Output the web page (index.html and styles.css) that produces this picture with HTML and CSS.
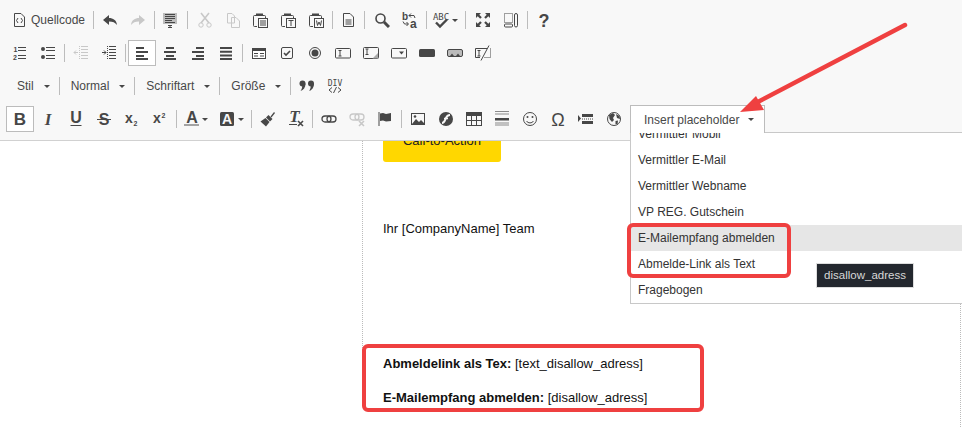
FILE: index.html
```html
<!DOCTYPE html>
<html lang="de">
<head>
<meta charset="utf-8">
<title>Editor</title>
<link rel="stylesheet" href="styles.css">
</head>
<body>
<svg class="defs" aria-hidden="true">
  <symbol id="source" viewBox="0 0 16 16"><path d="M2.500 1.500H9L12.500 5V14.500H2.500Z" class="ol"/><path d="M6 6 4.500 8.500 6 11M9 6 10.500 8.500 9 11" class="ol"/></symbol>
  <symbol id="undo" viewBox="0 0 16 16"><path d="M1 8 7 3V6C11 6 14.500 8 15 13 13 10.500 11 9.500 7 9.500V13Z"/></symbol>
  <symbol id="redo" viewBox="0 0 16 16"><path d="M15 8 9 3V6C5 6 1.500 8 1 13 3 10.500 5 9.500 9 9.500V13Z"/></symbol>
  <symbol id="templates" viewBox="0 0 16 16"><rect x="1" y="1" width="14" height="11" fill="#bdbdbd"/><path d="M3 2.500H13M3 4.500H13M3 6.500H13M3 8.500H10M3 10.500H13" class="ol"/><path d="M6 13.500H10M8 13.500V15.500M6 15.500H10" class="ol"/></symbol>
  <symbol id="cut" viewBox="0 0 16 16"><path d="M4 1 12 11M12 1 4 11" class="th"/><circle cx="4" cy="13" r="2.200" class="ol"/><circle cx="12" cy="13" r="2.200" class="ol"/></symbol>
  <symbol id="copy" viewBox="0 0 16 16"><path d="M2.500 1.500H7L9.500 4V11H2.500ZM6.500 5.500H11L14.500 9V15.500H6.500Z" class="ol"/></symbol>
  <symbol id="clip" viewBox="0 0 16 16"><path d="M4 3.500H2.500A1 1 0 0 0 1.500 4.500V13.500A1 1 0 0 0 2.500 14.500H5M11 3.500H12.500A1 1 0 0 1 13.500 4.500V6" class="ol"/><path d="M4 1.500H11V4H4Z"/></symbol>
  <symbol id="paste" viewBox="0 0 16 16"><use href="#clip"/><rect x="6.500" y="6.500" width="9" height="9" class="ol"/><path d="M8 9H14M8 11H14M8 13H14" class="ol"/></symbol>
  <symbol id="pastetext" viewBox="0 0 16 16"><use href="#clip"/><rect x="6.500" y="6.500" width="9" height="9" class="ol"/><path d="M8.500 8.500H13.500M11 8.500V14" class="ol"/></symbol>
  <symbol id="pasteword" viewBox="0 0 16 16"><use href="#clip"/><rect x="6.500" y="6.500" width="9" height="9" class="ol"/><path d="M8.500 8.500 9.500 13.500 11 10 12.500 13.500 13.500 8.500" class="ol"/></symbol>
  <symbol id="newdoc" viewBox="0 0 16 16"><path d="M3.500 1.500H10L13.500 5V14.500H3.500Z" class="ol"/><path d="M5.500 8H11.500M5.500 10H11.500M5.500 12H11.500" class="ol"/></symbol>
  <symbol id="find" viewBox="0 0 16 16"><circle cx="6.500" cy="6.500" r="4.500" class="th"/><path d="M10 10 15 15" class="thk"/></symbol>
  <symbol id="max" viewBox="0 0 16 16"><path d="M1 1H6L4.300 2.700 6.800 5.200 5.200 6.800 2.700 4.300 1 6ZM15 1V6L13.300 4.300 10.800 6.800 9.200 5.200 11.700 2.700 10 1ZM1 15V10L2.700 11.700 5.200 9.200 6.800 10.800 4.300 13.300 6 15ZM15 15H10L11.700 13.300 9.200 10.800 10.800 9.200 13.300 11.700 15 10Z"/></symbol>
  <symbol id="blocks" viewBox="0 0 16 16"><path d="M1.500 1.500H9.500V10.500H1.500Z" class="dot"/><rect x="1.500" y="12" width="8" height="3" rx="1" class="ol"/><rect x="11.500" y="1.500" width="3" height="13.500" rx="1.500" class="ol"/></symbol>
  <symbol id="ul" viewBox="0 0 16 16"><circle cx="3" cy="4" r="2"/><circle cx="3" cy="12" r="2"/><path d="M6 2.500H15M6 5.500H15M6 10.500H15M6 13.500H15" class="ol"/></symbol>
  <symbol id="outdent" viewBox="0 0 16 16"><path d="M8 1.500H15M8 4.500H15M8 7.500H15M8 10.500H15M8 13.500H15M1 7.500H5M3 5.500 1 7.500 3 9.500" class="ol"/><path d="M6.500 1V15" class="dot"/></symbol>
  <symbol id="indent" viewBox="0 0 16 16"><path d="M8 1.500H15M8 4.500H15M8 7.500H15M8 10.500H15M8 13.500H15M1 7.500H5M3 5.500 5 7.500 3 9.500" class="ol"/><path d="M6.500 1V15" class="dot"/></symbol>
  <symbol id="left" viewBox="0 0 16 16"><path d="M2 2H10V4H2ZM2 6H14V8H2ZM2 10H10V12H2ZM2 13H14V15H2Z"/></symbol>
  <symbol id="center" viewBox="0 0 16 16"><path d="M4 2H12V4H4ZM2 6H14V8H2ZM4 10H12V12H4ZM2 13H14V15H2Z"/></symbol>
  <symbol id="right" viewBox="0 0 16 16"><path d="M6 2H14V4H6ZM2 6H14V8H2ZM6 10H14V12H6ZM2 13H14V15H2Z"/></symbol>
  <symbol id="justify" viewBox="0 0 16 16"><path d="M2 2H14V4H2ZM2 5.700H14V7.700H2ZM2 9.400H14V11.400H2ZM2 13H14V15H2Z"/></symbol>
  <symbol id="form" viewBox="0 0 16 16"><rect x="1" y="3" width="14" height="11"/><path d="M2 6H14V13H2Z" fill="#fff"/><path d="M3 8H7V9H3ZM9 8H13V9H9ZM3 10.500H7V11.500H3ZM9 10.500H13V11.500H9Z"/></symbol>
  <symbol id="check" viewBox="0 0 16 16"><rect x="2.500" y="2.500" width="11" height="11" rx="1.500" class="ol"/><path d="M5 8 7 10 11 6" class="th"/></symbol>
  <symbol id="radio" viewBox="0 0 16 16"><circle cx="8" cy="8" r="5.500" class="ol"/><circle cx="8" cy="8" r="3.500"/></symbol>
  <symbol id="tfield" viewBox="0 0 16 16"><rect x="0.500" y="3.500" width="15" height="9.500" rx="1" class="ol"/><path d="M3.500 5.500H6.500M5 5.500V11M3.500 11H6.500" class="ol"/></symbol>
  <symbol id="tarea" viewBox="0 0 16 16"><rect x="0.500" y="2.500" width="15" height="11" rx="1" class="ol"/><path d="M2.500 4H5.500M4 4V9.500M2.500 9.500H5.500" class="ol"/><path d="M15 8 9.500 13.500H15Z" fill="#aaa"/></symbol>
  <symbol id="select" viewBox="0 0 16 16"><rect x="0.500" y="3.500" width="15" height="9.500" rx="1" class="ol"/><path d="M8 6.500H13L10.500 9.500Z"/></symbol>
  <symbol id="button" viewBox="0 0 16 16"><rect x="0" y="4" width="16" height="8" rx="1.500"/></symbol>
  <symbol id="imgbtn" viewBox="0 0 16 16"><rect x="0.500" y="4.500" width="15" height="7" rx="1.500" fill="#bbb" class="ols"/><path d="M3 11 5 8.500 7 11M9 11 11 8.500 13 11"/></symbol>
  <symbol id="hidden" viewBox="0 0 16 16"><path d="M12 3.500H.500V12.500H5M2.500 5.500H5.500M4 5.500V11M2.500 11H5.500" class="ol"/><path d="M15.500 3.500V12.500H9" class="dot"/><path d="M14 .5 6 15.500" class="ol"/></symbol>
  <symbol id="quote" viewBox="0 0 16 16"><circle cx="3.500" cy="5.500" r="3"/><path d="M6.500 5.500C6.500 9.500 4.500 12 1.500 13 2.800 11.300 3.200 9.500 3.200 8Z"/><circle cx="12" cy="5.500" r="3"/><path d="M15 5.500C15 9.500 13 12 10 13 11.300 11.300 11.700 9.500 11.700 8Z"/></symbol>
  <symbol id="link" viewBox="0 0 16 16"><rect x="1" y="5" width="9" height="6" rx="3" class="ml"/><rect x="6" y="5" width="9" height="6" rx="3" class="ml"/></symbol>
  <symbol id="unlink" viewBox="0 0 16 16"><rect x="1" y="3" width="9" height="6" rx="3" class="ml"/><rect x="6" y="3" width="9" height="6" rx="3" class="ml"/><path d="M10 10 15 15M15 10 10 15" class="th"/></symbol>
  <symbol id="anchor" viewBox="0 0 16 16"><path d="M2 1V15" class="ol"/><path d="M3 2.500 6 2 9 3 14 2V10L9 10.500 6 9.500 3 10Z"/></symbol>
  <symbol id="brush" viewBox="0 0 16 16"><path d="M10.500 5.500 14 1 15 2 11.500 6.500Z"/><path d="M8.500 4 12.500 8 10 10.500 6 6.500Z"/><path d="M5.500 7 9.500 11 6 15.500 .5 10.500Z"/></symbol>
  <symbol id="image" viewBox="0 0 16 16"><rect x="1.500" y="2.500" width="13" height="11" class="ol"/><path d="M2 13 6 8 9 11 11 9 14 12V13Z"/><circle cx="5" cy="5.500" r="1.300"/></symbol>
  <symbol id="flash" viewBox="0 0 16 16"><circle cx="8" cy="8" r="7"/><path d="M12 4C9 4 8.500 5.500 7.500 8 6.500 10.500 6 12 4 12" stroke="#f8f8f8" stroke-width="2" fill="none"/><path d="M6 7.500H10" stroke="#f8f8f8" stroke-width="1.500"/></symbol>
  <symbol id="table" viewBox="0 0 16 16"><rect x="0.500" y="1.500" width="15" height="13" class="ol"/><path d="M1 1.500H15V5H1Z"/><path d="M5.500 5V14M10.500 5V14M1 9.500H15" class="ol"/></symbol>
  <symbol id="hr" viewBox="0 0 16 16"><path d="M1 .5H15M1 3H15M1 12H15M1 14H15" class="gl"/><path d="M1 7H15V9.500H1Z"/></symbol>
  <symbol id="smiley" viewBox="0 0 16 16"><circle cx="8" cy="8" r="6.500" class="ol"/><circle cx="5.500" cy="6" r="1"/><circle cx="10.500" cy="6" r="1"/><path d="M4.500 10C6 12.500 10 12.500 11.500 10" class="ol"/></symbol>
  <symbol id="pbreak" viewBox="0 0 16 16"><path d="M0 4 3 7.500 0 11Z"/><path d="M4 3H15V6H4ZM4 10H15V13H4Z"/><path d="M4 8H15" class="dot"/></symbol>
  <symbol id="globe" viewBox="0 0 16 16"><circle cx="8" cy="8" r="6.500" class="ol"/><path d="M3 4 7 2 9 4 7 7 8 9 6 11 3.500 8ZM10 3 13.500 5 14 8 11 7ZM9.500 10 12 9.500 11.500 13.500 9.500 13Z"/></symbol>
</svg>

<div class="editor">
  <div class="toolbar">
    <div class="row">
      <span class="btn lbl"><svg class="ic"><use href="#source"/></svg>Quellcode</span>
      <i class="sep"></i>
      <span class="btn"><svg class="ic"><use href="#undo"/></svg></span>
      <span class="btn off"><svg class="ic"><use href="#redo"/></svg></span>
      <i class="sep t"></i>
      <span class="btn"><svg class="ic"><use href="#templates"/></svg></span>
      <i class="sep w"></i>
      <span class="btn off"><svg class="ic"><use href="#cut"/></svg></span>
      <span class="btn off narrow"><svg class="ic"><use href="#copy"/></svg></span>
      <span class="btn"><svg class="ic"><use href="#paste"/></svg></span>
      <span class="btn"><svg class="ic"><use href="#pastetext"/></svg></span>
      <span class="btn"><svg class="ic"><use href="#pasteword"/></svg></span>
      <i class="sep t"></i>
      <span class="btn"><svg class="ic"><use href="#newdoc"/></svg></span>
      <i class="sep m"></i>
      <span class="btn"><svg class="ic"><use href="#find"/></svg></span>
      <span class="btn"><svg class="ic" viewBox="0 0 16 16"><text x="0" y="8" class="t9">b</text><text x="8" y="15.500" class="t11">a</text><path d="M9 1.500 7 3.500 9 5.500M7 3.500H12L13 6M1 9.500 2.500 12H6M4.500 10 6.500 12 4.500 14" class="ol"/></svg></span>
      <i class="sep t"></i>
      <span class="btn arrowed spell"><svg class="ic" viewBox="0 0 16 16"><text x="8" y="7.500" class="t8" text-anchor="middle">ABC</text><path d="M3 10.500 7 14.500 14 7.500" class="thk2"/></svg><b class="caret"></b></span>
      <i class="sep m"></i>
      <span class="btn"><svg class="ic"><use href="#max"/></svg></span>
      <span class="btn"><svg class="ic"><use href="#blocks"/></svg></span>
      <i class="sep"></i>
      <span class="btn"><svg class="ic" viewBox="0 0 16 16"><text x="8" y="14.500" class="tq" text-anchor="middle">?</text></svg></span>
    </div>
    <div class="row">
      <span class="btn"><svg class="ic" viewBox="0 0 16 16"><text x="1.500" y="6.500" class="t7">1</text><text x="1" y="15" class="t7">2</text><path d="M6 2.500H14M6 5.500H14M6 10.500H14M6 13.500H14" class="ol"/></svg></span>
      <span class="btn"><svg class="ic"><use href="#ul"/></svg></span>
      <i class="sep"></i>
      <span class="btn off"><svg class="ic"><use href="#outdent"/></svg></span>
      <span class="btn"><svg class="ic"><use href="#indent"/></svg></span>
      <i class="sep"></i>
      <span class="btn on"><svg class="ic"><use href="#left"/></svg></span>
      <span class="btn"><svg class="ic"><use href="#center"/></svg></span>
      <span class="btn"><svg class="ic"><use href="#right"/></svg></span>
      <span class="btn"><svg class="ic"><use href="#justify"/></svg></span>
      <i class="sep"></i>
      <span class="btn"><svg class="ic"><use href="#form"/></svg></span>
      <span class="btn"><svg class="ic"><use href="#check"/></svg></span>
      <span class="btn"><svg class="ic"><use href="#radio"/></svg></span>
      <span class="btn"><svg class="ic"><use href="#tfield"/></svg></span>
      <span class="btn"><svg class="ic"><use href="#tarea"/></svg></span>
      <span class="btn"><svg class="ic"><use href="#select"/></svg></span>
      <span class="btn"><svg class="ic"><use href="#button"/></svg></span>
      <span class="btn"><svg class="ic"><use href="#imgbtn"/></svg></span>
      <span class="btn"><svg class="ic"><use href="#hidden"/></svg></span>
    </div>
    <div class="row">
      <span class="combo first">Stil<b class="caret"></b></span>
      <i class="sep"></i>
      <span class="combo">Normal<b class="caret"></b></span>
      <i class="sep"></i>
      <span class="combo">Schriftart<b class="caret"></b></span>
      <i class="sep"></i>
      <span class="combo">Größe<b class="caret"></b></span>
      <i class="sep"></i>
      <span class="btn"><svg class="ic"><use href="#quote"/></svg></span>
      <span class="btn"><svg class="ic" viewBox="0 0 16 16"><text x="8" y="7.500" class="t7n" text-anchor="middle">DIV</text><path d="M5 9.500 2 12 5 14.500M11 9.500 14 12 11 14.500M9.500 9 6.500 15" class="ol"/></svg></span>
    </div>
    <div class="row">
      <span class="btn on"><svg class="ic" viewBox="0 0 16 16"><text x="8" y="14" class="tb" text-anchor="middle">B</text></svg></span>
      <span class="btn"><svg class="ic" viewBox="0 0 16 16"><text x="8" y="14" class="ti" text-anchor="middle">I</text></svg></span>
      <span class="btn"><svg class="ic" viewBox="0 0 16 16"><text x="8" y="12" class="tu" text-anchor="middle">U</text><path d="M2.500 14.500H13.500" class="ol"/></svg></span>
      <span class="btn"><svg class="ic" viewBox="0 0 16 16"><text x="8" y="14" class="tu" text-anchor="middle">S</text><path d="M1 8.500H15" class="ol"/></svg></span>
      <span class="btn"><svg class="ic" viewBox="0 0 16 16"><text x="1" y="12" class="tx">x</text><text x="9.500" y="14.500" class="t6">2</text></svg></span>
      <span class="btn"><svg class="ic" viewBox="0 0 16 16"><text x="1" y="12" class="tx">x</text><text x="9.500" y="7" class="t6">2</text></svg></span>
      <i class="sep"></i>
      <span class="btn arrowed col"><svg class="ic" viewBox="0 0 16 16"><text x="8" y="11.500" class="tu" text-anchor="middle">A</text><rect x="0" y="13" width="15" height="2" fill="#a3a3a3"/></svg><b class="caret"></b></span>
      <span class="btn arrowed col"><svg class="ic" viewBox="0 0 16 16"><rect x="1" y="1" width="14" height="14" rx="1.500"/><text x="8" y="13" class="tuw" text-anchor="middle">A</text></svg><b class="caret"></b></span>
      <i class="sep"></i>
      <span class="btn"><svg class="ic"><use href="#brush"/></svg></span>
      <span class="btn"><svg class="ic" viewBox="0 0 16 16"><text x="6.500" y="11" class="ti" text-anchor="middle">T</text><path d="M1 13.500H9" class="ol"/><path d="M10 10 15 15M15 10 10 15" class="th"/></svg></span>
      <i class="sep"></i>
      <span class="btn"><svg class="ic"><use href="#link"/></svg></span>
      <span class="btn off"><svg class="ic"><use href="#unlink"/></svg></span>
      <span class="btn"><svg class="ic"><use href="#anchor"/></svg></span>
      <i class="sep"></i>
      <span class="btn"><svg class="ic"><use href="#image"/></svg></span>
      <span class="btn"><svg class="ic"><use href="#flash"/></svg></span>
      <span class="btn"><svg class="ic"><use href="#table"/></svg></span>
      <span class="btn"><svg class="ic"><use href="#hr"/></svg></span>
      <span class="btn"><svg class="ic"><use href="#smiley"/></svg></span>
      <span class="btn"><svg class="ic" viewBox="0 0 16 16"><text x="8" y="14.500" class="to" text-anchor="middle">Ω</text></svg></span>
      <span class="btn"><svg class="ic"><use href="#pbreak"/></svg></span>
      <span class="btn"><svg class="ic"><use href="#globe"/></svg></span>
      <span class="placeholder">Insert placeholder<b class="caret"></b></span>
    </div>
  </div>

  <div class="canvas">
    <div class="page">
      <a class="cta">Call-to-Action</a>
      <p class="team">Ihr [CompanyName] Team</p>
      <p class="unsub"><strong>Abmeldelink als Tex:</strong> [text_disallow_adress]</p>
      <p class="unsub"><strong>E-Mailempfang abmelden:</strong> [disallow_adress]</p>
      <p class="unsub"><strong>Kommen Sie vorbei</strong></p>
    </div>
  </div>
</div>

<div class="menu">
  <div class="menu-list">
    <div class="item">Vermittler Mobil</div>
    <div class="item">Vermittler E-Mail</div>
    <div class="item">Vermittler Webname</div>
    <div class="item">VP REG. Gutschein</div>
    <div class="item hover">E-Mailempfang abmelden</div>
    <div class="item">Abmelde-Link als Text</div>
    <div class="item">Fragebogen</div>
  </div>
</div>
<div class="tip">disallow_adress</div>
<div class="mark mark-menu"></div>
<div class="mark mark-text"></div>
<svg class="arrow" viewBox="0 0 962 427" aria-hidden="true">
  <path d="M905 25 752 105" stroke="#ef4040" stroke-width="4.500" stroke-linecap="round" fill="none"/>
  <path d="M740 112 756 96 764 110Z" fill="#ef4040"/>
</svg>
<div class="guide"></div>
</body>
</html>
```
FILE: styles.css
```css
* { box-sizing: border-box; }
html, body { margin: 0; height: 427px; overflow: hidden; background: #fff; }
body { position: relative; width: 962px; font: 12px/16px "Liberation Sans", Arial, sans-serif; color: #484848; }
.defs { position: absolute; width: 0; height: 0; }
.editor { display: flex; flex-direction: column; height: 427px; }

.toolbar { flex: none; height: 141px; padding: 3px 0 0 6px; background: #f8f8f8; border-bottom: 1px solid #d1d1d1; }
.row { display: flex; align-items: center; height: 33px; padding: 4px 0 3px; }
.sep { flex: none; width: 1px; height: 18px; margin: 0 2px; background: #bcbcbc; }
.sep.t { margin-right: 1px; }
.sep.m { margin-right: 3px; }
.sep.w { margin: 0 3px; }

.btn { flex: none; display: flex; align-items: center; justify-content: center; width: 28px; height: 26px; border: 1px solid transparent; fill: #474747; color: #474747; }
.btn.on { background: #fff; border-color: #bcbcbc; }
.btn.off { fill: #c8c8c8; color: #c8c8c8; }
.btn.narrow { width: 27px; }
.btn.lbl { width: auto; padding: 0 5px 0 5px; color: #484848; gap: 3px; }
.btn.arrowed { justify-content: flex-start; padding-left: 4px; gap: 3px; }
.btn.spell { width: 35px; }
.btn.col { width: 34px; gap: 2px; }
.btn.col + .btn.col { width: 36px; padding-left: 5px; gap: 3px; }

.ic { flex: none; width: 16px; height: 16px; overflow: visible; }
.caret { flex: none; width: 0; height: 0; border: 3.500px solid transparent; border-top: 3.500px solid #474747; border-bottom: 0; }

.combo { flex: none; display: flex; align-items: center; height: 26px; padding: 0 7px 0 9px; gap: 10px; }
.combo.first { padding-left: 11px; gap: 10px; }

.placeholder { position: relative; z-index: 2; flex: none; display: flex; align-items: center; align-self: flex-start; width: 135px; height: 28px; margin: -1px 0 0 2px; padding: 0 0 0 13px; gap: 9px; background: #fff; border: 1px solid #bcbcbc; border-bottom: 0; }

.ol { fill: none; stroke: currentColor; stroke-width: 1; }
.ols { stroke: #474747; stroke-width: 1; }
.ml { fill: none; stroke: currentColor; stroke-width: 1.300; }
.th { fill: none; stroke: currentColor; stroke-width: 1.600; }
.thk { fill: none; stroke: currentColor; stroke-width: 3; }
.thk2 { fill: none; stroke: currentColor; stroke-width: 2.400; }
.dot { fill: none; stroke: currentColor; stroke-width: 1; stroke-dasharray: 1 1; }
.gl { fill: none; stroke: #8a8a8a; stroke-width: 1; }

svg text { font-family: "Liberation Sans", Arial, sans-serif; fill: currentColor; }
.t6 { font-size: 7px; font-weight: 700; }
.t7 { font-size: 7px; font-weight: 700; }
.t7n { font-size: 8px; font-family: "DejaVu Sans Mono", monospace; }
.t8 { font-size: 9px; font-family: "DejaVu Sans Mono", monospace; }
.t9 { font-size: 10px; font-weight: 700; }
.t11 { font-size: 12px; font-weight: 700; }
.tq { font-size: 18px; font-weight: 700; }
.tb { font-size: 17px; font-weight: 700; }
.ti { font-size: 17px; font-weight: 700; font-style: italic; font-family: "Liberation Serif", serif; }
.tu { font-size: 16px; font-weight: 700; }
.tuw { font-size: 14px; font-weight: 700; fill: #f8f8f8; }
.tx { font-size: 14px; font-weight: 700; }
.to { font-size: 18px; }

.canvas { flex: 1; min-height: 0; overflow: hidden; background: #fff; }
.page { margin-left: 362px; height: 100%; padding-left: 20px; border-left: 1px dotted #bbb; color: #111; font-size: 13px; line-height: 17px; }
.page p { margin: 0; }
.cta { display: block; width: 118px; margin-top: -21px; padding: 12px 0 13px; background: #ffd700; border-radius: 3px; text-align: center; color: #222; }
.team { margin-top: 58px !important; }
.unsub { margin-bottom: 17px !important; }
.team + .unsub { margin-top: 118px !important; }

.menu { position: absolute; z-index: 1; left: 630px; top: 132px; width: 340px; height: 172px; overflow: hidden; background: #fff; border: 1px solid #c8c8c8; }
.menu-list { margin-top: -12px; }
.item { height: 26px; padding-left: 7px; line-height: 26px; color: #333; }
.item.hover { background: #e6e6e6; }

.tip { position: absolute; z-index: 3; left: 816px; top: 263px; width: 98px; height: 25px; background: #23272e; border: 1px solid #ddd; color: #d8d8d8; font-size: 11.500px; line-height: 23px; text-align: center; }
.mark { position: absolute; z-index: 4; border: 4px solid #ef4040; border-radius: 6px; }
.mark-menu { left: 627px; top: 223px; width: 164px; height: 55px; }
.mark-text { left: 362px; top: 344px; width: 342px; height: 68px; }
.arrow { position: absolute; z-index: 5; left: 0; top: 0; width: 962px; height: 427px; pointer-events: none; }
.guide { position: absolute; z-index: 0; left: 960px; top: 304px; height: 123px; border-left: 1px dotted #bbb; }
```
